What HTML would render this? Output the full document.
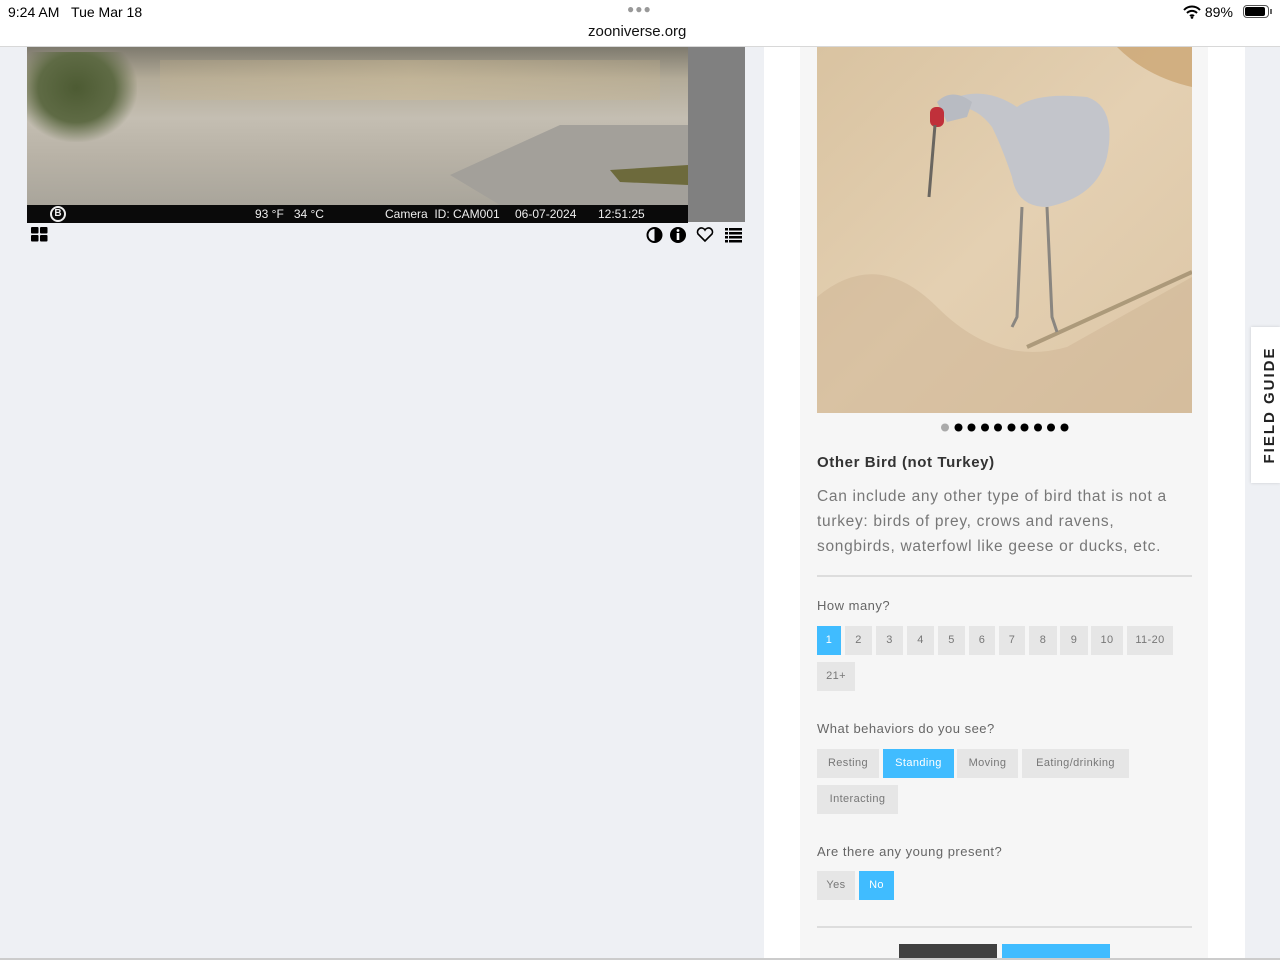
<!DOCTYPE html>
<html><head><meta charset="utf-8"><style>
*{margin:0;padding:0;box-sizing:border-box}
body{width:1280px;height:960px;overflow:hidden;background:#eef0f4;font-family:"Liberation Sans",sans-serif;position:relative}
.top{position:absolute;left:0;top:0;width:1280px;height:47px;background:#fff;border-bottom:1px solid #d8d8d8}
.abs{position:absolute}
.panel{position:absolute;left:764px;top:47px;width:481px;height:913px;background:#fff}
.card{position:absolute;left:800px;top:47px;width:408px;height:913px;background:#f6f6f6}
.lbl{position:absolute;left:817px;font-size:13px;color:#666;letter-spacing:.5px}
.btn{position:absolute;height:29px;background:#e6e6e6;color:#777;font-size:11px;line-height:29px;text-align:center;letter-spacing:.4px}
.on{background:#40bcff;color:#fff}
.bar span{position:absolute;top:0}
</style></head><body>
<div class="top">
<div class="abs" style="left:8px;top:4px;font-size:14px;color:#000">9:24 AM&nbsp;&nbsp;&nbsp;Tue Mar 18</div>
<div class="abs" style="left:627px;top:2px;font-size:12px;color:#999;letter-spacing:1px">●●●</div>
<div class="abs" style="left:588px;top:23px;font-size:15px;color:#111">zooniverse.org</div>
<div class="abs" style="left:1183px;top:4px;font-size:14px;color:#000">
<svg width="18" height="14" viewBox="0 0 18 14" style="vertical-align:-2px"><path d="M1 5a11 11 0 0 1 16 0M4 8a7 7 0 0 1 10 0M7 11a3 3 0 0 1 4 0" stroke="#000" stroke-width="2" fill="none"/><circle cx="9" cy="12.5" r="1.3"/></svg> 89%</div>
<div class="abs" style="left:1243px;top:5px;width:26px;height:13px;border:1px solid #555;border-radius:4px;padding:1px"><div style="width:20px;height:9px;background:#000;border-radius:2px"></div></div>
<div class="abs" style="left:1270px;top:9px;width:2px;height:5px;background:#666"></div>
</div>
<!-- camera image -->
<div class="abs" style="left:688px;top:47px;width:57px;height:175px;background:#808080"></div>
<div class="abs" style="left:27px;top:47px;width:661px;height:158px;background:linear-gradient(180deg,#7e7a6e 0%,#b3ab98 20%,#c4beb2 45%,#b8b2a6 70%,#a9a59b 100%)"></div>
<div class="abs" style="left:27px;top:52px;width:110px;height:90px;background:radial-gradient(ellipse at 45% 40%,#4d5b33 0%,#5f6b45 45%,rgba(150,150,120,0) 72%)"></div>
<div class="abs" style="left:160px;top:60px;width:500px;height:40px;background:linear-gradient(90deg,rgba(200,180,140,.25),rgba(210,190,150,.45),rgba(200,180,140,.25))"></div>
<svg class="abs" style="left:440px;top:120px" width="248" height="85"><polygon points="10,55 120,5 248,5 248,85 60,85" fill="#a3a09a"/><polygon points="170,50 248,45 248,65 180,62" fill="#6d6a3c"/><rect x="125" y="-30" width="14" height="30" fill="#6a6458"/></svg>
<div class="abs bar" style="left:27px;top:205px;width:661px;height:18px;background:#0a0a0a;color:#eee;font-size:12px;line-height:18px;white-space:pre">
<span style="left:23px;top:1px;width:16px;height:16px;border:2px solid #eee;border-radius:50%;font-size:10px;text-align:center;line-height:12px;font-weight:bold">B</span>
<span style="left:228px">93 °F   34 °C</span>
<span style="left:358px">Camera  ID: CAM001</span>
<span style="left:488px">06-07-2024</span>
<span style="left:571px">12:51:25</span></div>
<svg class="abs" style="left:31px;top:227px" width="17" height="15"><rect x="0" y="0" width="7.5" height="6.5" rx="1"/><rect x="9" y="0" width="7.5" height="6.5" rx="1"/><rect x="0" y="8" width="7.5" height="6.5" rx="1"/><rect x="9" y="8" width="7.5" height="6.5" rx="1"/></svg>
<svg class="abs" style="left:646px;top:226px" width="98" height="18">
<circle cx="8.5" cy="9" r="7" fill="none" stroke="#000" stroke-width="2"/><path d="M8.5 2a7 7 0 0 1 0 14z"/>
<circle cx="32" cy="9" r="8"/><rect x="30.7" y="7" width="2.6" height="7" fill="#fff"/><circle cx="32" cy="4.5" r="1.4" fill="#fff"/>
<path d="M59 15L52 8a4 4 0 0 1 7-4a4 4 0 0 1 7 4z" fill="none" stroke="#000" stroke-width="1.6"/>
<g fill="#000"><rect x="79" y="2" width="3" height="2.5"/><rect x="83" y="2" width="13" height="2.5"/><rect x="79" y="6" width="3" height="2.5"/><rect x="83" y="6" width="13" height="2.5"/><rect x="79" y="10" width="3" height="2.5"/><rect x="83" y="10" width="13" height="2.5"/><rect x="79" y="14" width="3" height="2.5"/><rect x="83" y="14" width="13" height="2.5"/></g></svg>
<!-- right panel -->
<div class="panel"></div>
<div class="card"></div>
<svg class="abs" style="left:817px;top:47px" width="375" height="366">
<defs><linearGradient id="s" x1="0" y1="0" x2="1" y2="1"><stop offset="0" stop-color="#d9c3a1"/><stop offset=".5" stop-color="#e4d0b2"/><stop offset="1" stop-color="#dcc6a6"/></linearGradient></defs>
<rect width="375" height="366" fill="url(#s)"/>
<path d="M0 250 Q60 200 120 260 T250 300 L375 230 L375 366 L0 366z" fill="#cdb494" opacity=".5"/>
<path d="M300 0 L375 0 L375 40 Q330 30 300 0z" fill="#c49a60" opacity=".6"/>
<path d="M210 300 L375 225" stroke="#7a6a4a" stroke-width="4" opacity=".5"/>
<path d="M140 50 Q170 40 200 60 Q220 45 270 50 Q300 60 290 110 Q280 150 230 160 Q200 160 195 130 Q185 100 175 80 Q160 60 140 60z" fill="#c3c5cb"/>
<path d="M120 55 Q135 40 155 55 L150 70 L130 75z" fill="#b8bbc2"/>
<rect x="113" y="60" width="14" height="20" rx="6" fill="#c0303a"/>
<path d="M118 78 L112 150" stroke="#6a6660" stroke-width="3"/>
<path d="M205 160 L200 270 L195 280 M230 160 L235 270 L240 285" stroke="#8a8680" stroke-width="3" fill="none"/>
</svg>
<svg class="abs" style="left:940px;top:422px" width="130" height="11"><circle cx="5" cy="5.5" r="4" fill="#aaa"/><g fill="#000"><circle cx="18.5" cy="5.5" r="4"/><circle cx="31.5" cy="5.5" r="4"/><circle cx="45" cy="5.5" r="4"/><circle cx="58" cy="5.5" r="4"/><circle cx="71.5" cy="5.5" r="4"/><circle cx="84.5" cy="5.5" r="4"/><circle cx="98" cy="5.5" r="4"/><circle cx="111" cy="5.5" r="4"/><circle cx="124.5" cy="5.5" r="4"/></g></svg>
<div class="abs" style="left:817px;top:454px;font-size:15px;font-weight:bold;color:#333;letter-spacing:.6px">Other Bird (not Turkey)</div>
<div class="abs" style="left:817px;top:484px;width:375px;font-size:15.5px;line-height:25px;color:#777;letter-spacing:.7px">Can include any other type of bird that is not a turkey: birds of prey, crows and ravens, songbirds, waterfowl like geese or ducks, etc.</div>
<div class="abs" style="left:817px;top:575px;width:375px;height:2px;background:#ddd"></div>
<div class="lbl" style="top:598px">How many?</div>
<div class="btn on" style="left:817px;top:626px;width:24px">1</div>
<div class="btn" style="left:845px;top:626px;width:27px">2</div>
<div class="btn" style="left:876px;top:626px;width:27px">3</div>
<div class="btn" style="left:907px;top:626px;width:27px">4</div>
<div class="btn" style="left:938px;top:626px;width:27px">5</div>
<div class="btn" style="left:969px;top:626px;width:26px">6</div>
<div class="btn" style="left:999px;top:626px;width:26px">7</div>
<div class="btn" style="left:1029px;top:626px;width:28px">8</div>
<div class="btn" style="left:1060px;top:626px;width:28px">9</div>
<div class="btn" style="left:1091px;top:626px;width:32px">10</div>
<div class="btn" style="left:1127px;top:626px;width:46px">11-20</div>
<div class="btn" style="left:817px;top:662px;width:38px">21+</div>
<div class="lbl" style="top:721px">What behaviors do you see?</div>
<div class="btn" style="left:817px;top:749px;width:62px">Resting</div>
<div class="btn on" style="left:883px;top:749px;width:71px">Standing</div>
<div class="btn" style="left:957px;top:749px;width:61px">Moving</div>
<div class="btn" style="left:1022px;top:749px;width:107px">Eating/drinking</div>
<div class="btn" style="left:817px;top:785px;width:81px">Interacting</div>
<div class="lbl" style="top:844px">Are there any young present?</div>
<div class="btn" style="left:817px;top:871px;width:38px">Yes</div>
<div class="btn on" style="left:859px;top:871px;width:35px">No</div>
<div class="abs" style="left:817px;top:926px;width:375px;height:2px;background:#ddd"></div>
<div class="abs" style="left:899px;top:944px;width:98px;height:16px;background:#404040"></div>
<div class="abs" style="left:1002px;top:944px;width:108px;height:16px;background:#40bcff"></div>
<div class="abs" style="left:0;top:958px;width:1280px;height:2px;background:#ccc"></div>
<!-- field guide tab -->
<div class="abs" style="left:1251px;top:327px;width:29px;height:156px;background:#fff;box-shadow:0 0 3px rgba(0,0,0,.15)"></div>
<div class="abs" style="left:1192px;top:396px;width:156px;height:18px;transform:rotate(-90deg);font-size:15px;font-weight:bold;letter-spacing:2px;color:#222;text-align:center">FIELD GUIDE</div>
</body></html>
